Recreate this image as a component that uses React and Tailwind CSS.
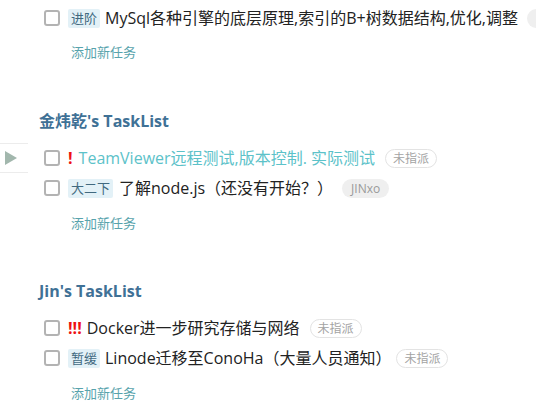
import React from "react";

const FONT = { fontFamily: '"Open Sans","Noto Sans CJK SC",sans-serif' };

function Checkbox() {
  return <span className="w-[16px] h-[16px] shrink-0 rounded-[3px] border-2 border-[#b3b3b3] bg-white" />;
}

function Tag({ children }) {
  return (
    <span className="shrink-0 rounded-[2px] bg-[#e3f1f7] px-[3px] text-[13px] leading-[19px] text-[#41697f]">
      {children}
    </span>
  );
}

function Badge({ children, filled, className = "" }) {
  return filled ? (
    <span className={"shrink-0 rounded-full bg-[#efefef] px-[9px] text-[12px] leading-[19px] text-[#9a9a9a] " + className}>
      {children}
    </span>
  ) : (
    <span className={"shrink-0 rounded-full border border-[#e3e3e3] px-[7px] text-[12px] leading-[17px] text-[#a3a3a3] " + className}>
      {children}
    </span>
  );
}

function Row({ active, children }) {
  return (
    <div className="flex h-[30px] items-center whitespace-nowrap">
      <div
        className={
          "w-[28px] h-[30px] shrink-0 flex items-center " +
          (active ? "border-y border-[#ececec]" : "")
        }
      >
        {active && (
          <svg width="14" height="14" viewBox="0 0 14 14" className="ml-[4px]">
            <polygon points="1,0 13,7 1,14" fill="#a2b7ad" />
          </svg>
        )}
      </div>
      <div className="ml-[16px] flex items-center gap-[8px] text-[16px] text-[#222]">{children}</div>
    </div>
  );
}

function AddLink({ className }) {
  return (
    <div className={"h-[24px] pl-[71px] text-[13px] leading-[24px] text-[#58a3ac] " + className}>添加新任务</div>
  );
}

function Heading({ children, className }) {
  return (
    <div className={"h-[24px] pl-[39px] text-[16px] font-bold leading-[24px] text-[#3f7196] " + className}>
      {children}
    </div>
  );
}

export default function App() {
  return (
    <div className="w-[536px] h-[416px] overflow-hidden bg-white pt-[3px]" style={FONT}>
      <Row>
        <Checkbox />
        <span className="flex items-center gap-[5px]">
          <Tag>进阶</Tag>
          <span>MySql各种引擎的底层原理,索引的B+树数据结构,优化,调整</span>
        </span>
        <Badge filled className="ml-[1px]">未指派</Badge>
      </Row>
      <AddLink className="mt-[7px]" />

      <Heading className="mt-[45px]">金炜乾's TaskList</Heading>
      <div className="mt-[10px]">
        <Row active>
          <Checkbox />
          <span className="flex items-center">
            <span className="font-bold text-[#ee1111] mr-[6px]">!</span>
            <span className="text-[#5cc2c9]">TeamViewer远程测试,版本控制. 实际测试</span>
            <Badge className="ml-[10px]">未指派</Badge>
          </span>
        </Row>
        <Row>
          <Checkbox />
          <span className="flex items-center gap-[6px]">
            <Tag>大二下</Tag>
            <span>了解node.js（还没有开始？）</span>
            <Badge filled className="ml-[3px]">JINxo</Badge>
          </span>
        </Row>
      </div>
      <AddLink className="mt-[8px]" />

      <Heading className="mt-[44px]">Jin's TaskList</Heading>
      <div className="mt-[10px]">
        <Row>
          <Checkbox />
          <span className="flex items-center">
            <span className="font-bold text-[#ee1111] mr-[5px]">!!!</span>
            <span>Docker进一步研究存储与网络</span>
            <Badge className="ml-[10px]">未指派</Badge>
          </span>
        </Row>
        <Row>
          <Checkbox />
          <span className="flex items-center gap-[5px]">
            <Tag>暂缓</Tag>
            <span>Linode迁移至ConoHa（大量人员通知）</span>
            <Badge className="ml-[0px]">未指派</Badge>
          </span>
        </Row>
      </div>
      <AddLink className="mt-[8px]" />
    </div>
  );
}
